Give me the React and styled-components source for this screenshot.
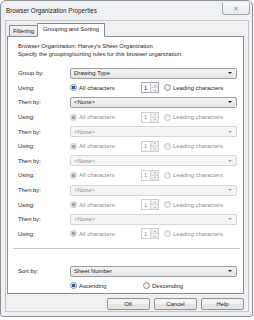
import React from "react";
import styled, { createGlobalStyle } from "styled-components";

const Global = createGlobalStyle`
  body {
    margin: 0;
    background: #ffffff;
    font-family: "Liberation Sans", Arial, sans-serif;
    font-size: 5.9px;
    color: #1e1e1e;
  }
`;

const Window = styled.div`
  width: 253px;
  height: 317px;
  box-sizing: border-box;
  border: 1px solid #8d9096;
  border-radius: 6px 6px 3px 3px;
  background: #eff1f4;
  display: flex;
  flex-direction: column;
`;

const TitleBar = styled.div`
  height: 19px;
  display: flex;
  align-items: flex-start;
  justify-content: space-between;
  padding-left: 5px;
  padding-right: 2px;
`;

const Title = styled.span`
  font-size: 6.3px;
  margin-top: 6px;
  color: #222;
`;

const CloseButton = styled.div`
  width: 26px;
  height: 11px;
  margin-top: 2px;
  border: 1px solid #a4a7ad;
  border-top: none;
  border-radius: 0 0 3px 3px;
  background: linear-gradient(#f7f8fa, #e9ebee);
  color: #8e9197;
  font-size: 6.5px;
  display: flex;
  align-items: center;
  justify-content: center;
`;

const Client = styled.div`
  flex: 1;
  margin: 0 3px 4px 4px;
  background: #f0f0f0;
  border: 1px solid #c3c6cb;
  display: flex;
  flex-direction: column;
  padding: 1px 4px 0 1px;
`;

const TabRow = styled.div`
  display: flex;
  align-items: flex-end;
  height: 14px;
  padding-left: 2px;
`;

const Tab = styled.div`
  height: ${(p) => (p.$active ? 14 : 11)}px;
  box-sizing: border-box;
  padding: ${(p) => (p.$active ? "2px 5px 0" : "2px 3px 0")};
  border: 1px solid #898c95;
  border-bottom: ${(p) => (p.$active ? "1px solid #fff" : "none")};
  margin-left: ${(p) => (p.$active ? "-1px" : "0")};
  margin-bottom: ${(p) => (p.$active ? "-1px" : "0")};
  background: ${(p) => (p.$active ? "#fff" : "linear-gradient(#f2f2f2, #e3e3e3)")};
  position: relative;
  z-index: ${(p) => (p.$active ? 1 : 0)};
`;

const Panel = styled.div`
  background: #fff;
  border: 1px solid #898c95;
  height: 258px;
  box-sizing: border-box;
  padding: 5px 6px 0 10px;
  display: flex;
  flex-direction: column;
`;

const Intro = styled.div`
  line-height: 8px;
  margin-bottom: 8px;
`;

const Grid = styled.div`
  display: grid;
  grid-template-columns: 52px 1fr;
  grid-auto-rows: 14.6px;
  align-items: center;
`;

const Label = styled.div`
  color: #1e1e1e;
`;

const Select = styled.div`
  height: 11px;
  box-sizing: border-box;
  border: 1px solid ${(p) => (p.$disabled ? "#d3d5d8" : "#9a9da2")};
  border-radius: 2px;
  background: ${(p) => (p.$disabled ? "#f4f4f4" : "linear-gradient(#f4f4f4, #e4e4e4)")};
  color: ${(p) => (p.$disabled ? "#8c8c8c" : "#1e1e1e")};
  display: flex;
  align-items: center;
  justify-content: space-between;
  padding: 0 4px 0 3px;
`;

const Arrow = styled.span`
  width: 0;
  height: 0;
  border-left: 2px solid transparent;
  border-right: 2px solid transparent;
  border-top: 2px solid ${(p) => (p.$disabled ? "#a0a0a0" : "#222")};
`;

const UsingRow = styled.div`
  display: flex;
  align-items: center;
  color: ${(p) => (p.$disabled ? "#8c8c8c" : "#1e1e1e")};
`;

const RadioDot = styled.span`
  width: 7px;
  height: 7px;
  box-sizing: border-box;
  border-radius: 50%;
  border: 1px solid ${(p) => (p.$disabled ? "#c4c6c9" : "#8d9096")};
  background: ${(p) =>
    p.$checked
      ? `radial-gradient(circle, ${p.$disabled ? "#9aa3ad" : "#1f5fa5"} 0 1.6px, #dbe4ee 2px)`
      : "linear-gradient(#e8e8e8, #f8f8f8)"};
  margin-right: 2px;
  flex: none;
`;

const Radio = styled.label`
  display: flex;
  align-items: center;
  width: ${(p) => p.$w || "auto"};
`;

const Spinner = styled.div`
  display: flex;
  height: 11px;
  width: 18px;
  box-sizing: border-box;
  border: 1px solid ${(p) => (p.$disabled ? "#ccced1" : "#a6a9ae")};
  margin-right: 5px;
`;

const SpinValue = styled.div`
  flex: 1;
  display: flex;
  align-items: center;
  padding-left: 2px;
`;

const SpinButtons = styled.div`
  width: 7px;
  display: flex;
  flex-direction: column;
  border-left: 1px solid #d0d2d5;
`;

const SpinBtn = styled.div`
  flex: 1;
  background: linear-gradient(#f6f6f6, #e6e6e6);
  display: flex;
  align-items: center;
  justify-content: center;
  &:first-child {
    border-bottom: 1px solid #d6d8db;
  }
`;

const Tri = styled.span`
  width: 0;
  height: 0;
  border-left: 1.5px solid transparent;
  border-right: 1.5px solid transparent;
  ${(p) => (p.$up ? "border-bottom" : "border-top")}: 1.5px solid #8a8a8a;
`;

const Separator = styled.div`
  height: 1px;
  background: #c8cacd;
  margin: 7px -3px 15px -5px;
`;

const Footer = styled.div`
  display: flex;
  justify-content: flex-end;
  gap: 4px;
  padding: 4px 0 0;
`;

const Button = styled.div`
  width: 43px;
  height: 12px;
  box-sizing: border-box;
  border: 1px solid #8f9297;
  border-radius: 2px;
  background: linear-gradient(#f4f4f4 50%, #e4e4e4 50%);
  display: flex;
  align-items: center;
  justify-content: center;
`;

function SelectBox({ value, disabled }) {
  return (
    <Select $disabled={disabled}>
      <span>{value}</span>
      <Arrow $disabled={disabled} />
    </Select>
  );
}

function Using({ disabled }) {
  return (
    <UsingRow $disabled={disabled}>
      <Radio $w="71px">
        <RadioDot $checked $disabled={disabled} />
        All characters
      </Radio>
      <Spinner $disabled={disabled}>
        <SpinValue>1</SpinValue>
        <SpinButtons>
          <SpinBtn>
            <Tri $up />
          </SpinBtn>
          <SpinBtn>
            <Tri />
          </SpinBtn>
        </SpinButtons>
      </Spinner>
      <Radio>
        <RadioDot $disabled={disabled} />
        Leading characters
      </Radio>
    </UsingRow>
  );
}

// first "Then by" is enabled, all following rows are disabled
const thenRows = [
  { select: false, using: true },
  { select: true, using: true },
  { select: true, using: true },
  { select: true, using: true },
  { select: true, using: true },
];

export default function App() {
  return (
    <>
      <Global />
      <Window>
        <TitleBar>
          <Title>Browser Organization Properties</Title>
          <CloseButton>✕</CloseButton>
        </TitleBar>
        <Client>
          <TabRow>
            <Tab>Filtering</Tab>
            <Tab $active>Grouping and Sorting</Tab>
          </TabRow>
          <Panel>
            <Intro>
              Browser Organization: Harvey's Sheet Organization
              <br />
              Specify the grouping/sorting rules for this browser organization.
            </Intro>
            <Grid>
              <Label>Group by:</Label>
              <SelectBox value="Drawing Type" />
              <Label>Using:</Label>
              <Using />
              {thenRows.map((row, i) => (
                <React.Fragment key={i}>
                  <Label>Then by:</Label>
                  <SelectBox value="<None>" disabled={row.select} />
                  <Label>Using:</Label>
                  <Using disabled={row.using} />
                </React.Fragment>
              ))}
            </Grid>
            <Separator />
            <Grid>
              <Label>Sort by:</Label>
              <SelectBox value="Sheet Number" />
              <span />
              <UsingRow>
                <Radio $w="73px">
                  <RadioDot $checked />
                  Ascending
                </Radio>
                <Radio>
                  <RadioDot />
                  Descending
                </Radio>
              </UsingRow>
            </Grid>
          </Panel>
          <Footer>
            <Button>OK</Button>
            <Button>Cancel</Button>
            <Button>Help</Button>
          </Footer>
        </Client>
      </Window>
    </>
  );
}
